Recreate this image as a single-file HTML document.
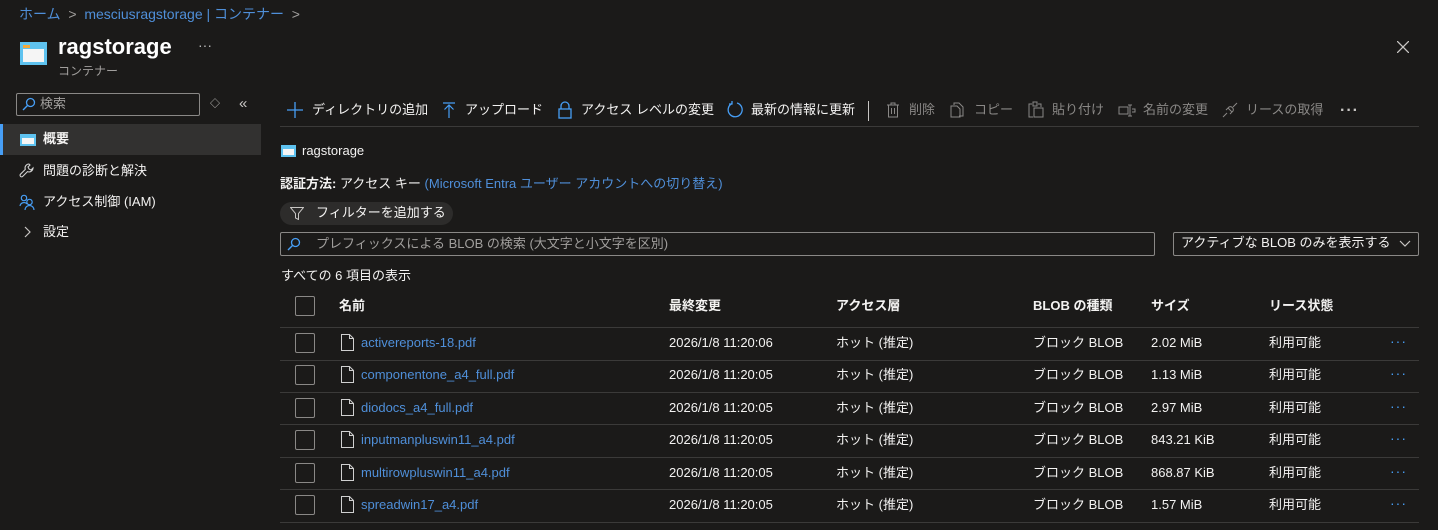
<!DOCTYPE html>
<html><head><meta charset="utf-8"><style>
*{margin:0;padding:0;box-sizing:border-box}
body{width:1438px;height:530px;background:#1b1a19;color:#f3f2f1;font-family:"Liberation Sans","Noto Sans CJK JP",sans-serif;font-size:13px;position:relative;overflow:hidden}
.a{position:absolute;white-space:nowrap;line-height:18px}
.blue{color:#479ef5}
.lnk{color:#4f8fd9}
.g{color:#8a8886}
.tb{top:101px;font-size:13px;line-height:18px}
.hd{font-weight:bold;top:297px;line-height:18px}
.cb{position:absolute;left:295px;width:20px;height:20px;border:1px solid #8a8886;border-radius:2px}
.sep{position:absolute;left:280px;width:1139px;height:1px;background:#3b3a39}
</style></head><body>
<div class="a lnk" style="left:19px;top:4px;font-size:14px;line-height:20px">ホーム &nbsp;<span style="color:#a19f9d">&gt;</span>&nbsp; mesciusragstorage | コンテナー &nbsp;<span style="color:#a19f9d">&gt;</span></div>

<svg class="a" style="left:20px;top:42px" width="27" height="23" viewBox="0 0 27 23"><rect x="0" y="0" width="27" height="23" fill="#5ec2ef"/><rect x="3" y="7" width="21" height="13" fill="#f5f5f5"/><rect x="3" y="3" width="7" height="3" fill="#f2a93b"/></svg>
<div class="a" style="left:58px;top:33px;font-size:22px;line-height:28px;font-weight:bold;color:#fff">ragstorage</div>
<div class="a g" style="left:198px;top:36px;font-size:14px;color:#bbb">···</div>
<div class="a" style="left:58px;top:62px;font-size:12px;color:#a19f9d">コンテナー</div>
<svg class="a" style="left:1397px;top:41px" width="12" height="12"><path d="M0 0L12 12M12 0L0 12" stroke="#c8c6c4" stroke-width="1.3"/></svg>

<div class="a" style="left:16px;top:93px;width:184px;height:23px;border:1px solid #8a8886;border-radius:2px"></div>
<svg class="a" style="left:22px;top:97px" width="14" height="14"><circle cx="8.5" cy="5.5" r="4" stroke="#479ef5" fill="none" stroke-width="1.3"/><path d="M5.5 8.5L1 13" stroke="#479ef5" stroke-width="1.4"/></svg>
<div class="a" style="left:40px;top:95px;color:#a19f9d">検索</div>
<div class="a" style="left:210px;top:96px;font-size:10px;color:#c8c6c4">◇</div>
<div class="a" style="left:239px;top:95px;font-size:15px;color:#c8c6c4">«</div>
<div class="a" style="left:0;top:124px;width:261px;height:31px;background:#323130"></div>
<div class="a" style="left:0;top:124px;width:3px;height:31px;background:#479ef5"></div>
<svg class="a" style="left:20px;top:134px" width="16" height="12"><rect width="16" height="12" fill="#5ec2ef"/><rect x="2" y="4" width="12" height="6" fill="#f5f5f5"/></svg>
<div class="a" style="left:43px;top:130px;font-weight:bold">概要</div>
<svg class="a" style="left:19px;top:163px" width="16" height="16" viewBox="0 0 16 16"><path d="M10 1a4 4 0 0 0-3.7 5.4L1.5 11.2a1.5 1.5 0 0 0 2.2 2.2l4.8-4.8A4 4 0 0 0 14 5l-2 2-2-1-1-2 2-2z" fill="none" stroke="#d0d0d0" stroke-width="1.1"/></svg>
<div class="a" style="left:43px;top:162px">問題の診断と解決</div>
<svg class="a" style="left:19px;top:194px" width="16" height="16"><circle cx="5" cy="4" r="2.7" stroke="#479ef5" fill="none" stroke-width="1.2"/><path d="M1 12a4 4 0 0 1 7 -2" stroke="#479ef5" fill="none" stroke-width="1.2"/><circle cx="10.5" cy="8" r="2.7" stroke="#479ef5" fill="none" stroke-width="1.2"/><path d="M6 16a4.5 4.5 0 0 1 9 0" stroke="#479ef5" fill="none" stroke-width="1.2"/></svg>
<div class="a" style="left:43px;top:193px">アクセス制御 (IAM)</div>
<svg class="a" style="left:24px;top:226px" width="8" height="12"><path d="M1 1l5 5-5 5" stroke="#c8c6c4" fill="none" stroke-width="1.2"/></svg>
<div class="a" style="left:43px;top:223px">設定</div>

<svg class="a" style="left:287px;top:102px" width="16" height="16"><path d="M8 0v16M0 8h16" stroke="#479ef5" stroke-width="1.3"/></svg>
<div class="a tb" style="left:312px">ディレクトリの追加</div>
<svg class="a" style="left:443px;top:102px" width="12" height="16"><path d="M0 1h12M6 3v13M1.5 7.5L6 3l4.5 4.5" stroke="#479ef5" fill="none" stroke-width="1.2"/></svg>
<div class="a tb" style="left:465px">アップロード</div>
<svg class="a" style="left:558px;top:101px" width="14" height="18"><path d="M3 8V5a4 4 0 0 1 8 0v3" stroke="#479ef5" fill="none" stroke-width="1.3"/><rect x="1" y="8" width="12" height="9" stroke="#479ef5" fill="none" stroke-width="1.3"/></svg>
<div class="a tb" style="left:581px">アクセス レベルの変更</div>
<svg class="a" style="left:726px;top:101px" width="18" height="18"><path d="M6 2.5A7 7 0 1 0 11 2" stroke="#479ef5" fill="none" stroke-width="1.3"/><path d="M6 0v3h-3" stroke="#479ef5" fill="none" stroke-width="1.3"/></svg>
<div class="a tb" style="left:751px">最新の情報に更新</div>
<div class="a" style="left:868px;top:101px;width:1px;height:20px;background:#c8c6c4"></div>
<svg class="a" style="left:886px;top:102px" width="14" height="16"><path d="M1 3h12M5 3V1h4v2M2.5 3v12h9V3M5.5 6v6M8.5 6v6" stroke="#8a8886" fill="none"/></svg>
<div class="a tb g" style="left:909px">削除</div>
<svg class="a" style="left:950px;top:102px" width="16" height="16"><path d="M4 3V1h5l4 4v9H9M1 4h6l3 3v8H1z" stroke="#8a8886" fill="none"/></svg>
<div class="a tb g" style="left:974px">コピー</div>
<svg class="a" style="left:1028px;top:101px" width="16" height="17"><path d="M4 3H1v13h4M10 3h3v3M5 1h4v4H5zM6 7h9v9H6z" stroke="#8a8886" fill="none"/></svg>
<div class="a tb g" style="left:1052px">貼り付け</div>
<svg class="a" style="left:1118px;top:104px" width="18" height="13"><path d="M1 3h9v7H1zM12 1v11M10 1h4M10 12h4M14 5h3v3h-3" stroke="#8a8886" fill="none"/></svg>
<div class="a tb g" style="left:1143px">名前の変更</div>
<svg class="a" style="left:1222px;top:102px" width="16" height="16"><path d="M1 15l4-4M6 6l4 4M4 8l3-3a3 3 0 0 1 4 4l-3 3M15 1l-4 4" stroke="#8a8886" fill="none"/></svg>
<div class="a tb g" style="left:1246px">リースの取得</div>
<div class="a" style="left:1340px;top:102px;font-size:16px;font-weight:bold;color:#c8c6c4;letter-spacing:1px">···</div>
<div class="a" style="left:280px;top:126px;width:1139px;height:1px;background:#3b3a39"></div>

<svg class="a" style="left:281px;top:145px" width="15" height="12"><rect width="15" height="12" fill="#5ec2ef"/><rect x="2" y="4" width="11" height="6" fill="#f5f5f5"/></svg>
<div class="a" style="left:302px;top:142px">ragstorage</div>
<div class="a" style="left:280px;top:175px"><b>認証方法:</b> アクセス キー <span class="lnk">(Microsoft Entra ユーザー アカウントへの切り替え)</span></div>
<div class="a" style="left:280px;top:202px;width:173px;height:23px;border-radius:12px;background:#2d2c2b"></div>
<svg class="a" style="left:290px;top:207px" width="14" height="13"><path d="M0.5 0.5h13L8.5 6.5v6l-3-1.5v-4.5z" stroke="#c8c6c4" fill="none"/></svg>
<div class="a" style="left:316px;top:204px">フィルターを追加する</div>
<div class="a" style="left:280px;top:232px;width:875px;height:24px;border:1px solid #8a8886;border-radius:2px"></div>
<svg class="a" style="left:287px;top:237px" width="14" height="14"><circle cx="8.5" cy="5.5" r="4" stroke="#479ef5" fill="none" stroke-width="1.3"/><path d="M5.5 8.5L1 13" stroke="#479ef5" stroke-width="1.4"/></svg>
<div class="a" style="left:316px;top:235px;color:#a19f9d">プレフィックスによる BLOB の検索 (大文字と小文字を区別)</div>
<div class="a" style="left:1173px;top:232px;width:246px;height:24px;border:1px solid #8a8886;border-radius:2px"></div>
<div class="a" style="left:1181px;top:234px">アクティブな BLOB のみを表示する</div>
<svg class="a" style="left:1399px;top:240px" width="12" height="8"><path d="M1 1l5 5 5-5" stroke="#c8c6c4" fill="none" stroke-width="1.2"/></svg>

<div class="a" style="left:281px;top:267px">すべての 6 項目の表示</div>
<div class="cb" style="top:296px"></div>
<div class="a hd" style="left:339px">名前</div>
<div class="a hd" style="left:669px">最終変更</div>
<div class="a hd" style="left:836px">アクセス層</div>
<div class="a hd" style="left:1033px">BLOB の種類</div>
<div class="a hd" style="left:1151px">サイズ</div>
<div class="a hd" style="left:1269px">リース状態</div>
<div class="sep" style="top:327px"></div>

<div id="rows"></div>
<script>
var d=[["activereports-18.pdf","06","2.02 MiB"],["componentone_a4_full.pdf","05","1.13 MiB"],["diodocs_a4_full.pdf","05","2.97 MiB"],["inputmanpluswin11_a4.pdf","05","843.21 KiB"],["multirowpluswin11_a4.pdf","05","868.87 KiB"],["spreadwin17_a4.pdf","05","1.57 MiB"]];
var h="";
d.forEach(function(r,i){var c=343+i*32.4;var t=Math.round(c-9);
h+='<div class="cb" style="top:'+Math.round(c-10)+'px"></div>';
h+='<svg class="a" style="left:341px;top:'+Math.round(c-9)+'px" width="13" height="17"><path d="M0.5 0.5h8l4 4v12h-12z M8.5 0.5v4h4" stroke="#d0d0d0" fill="none"/></svg>';
h+='<div class="a lnk" style="left:361px;top:'+t+'px">'+r[0]+'</div>';
h+='<div class="a" style="left:669px;top:'+t+'px">2026/1/8 11:20:'+r[1]+'</div>';
h+='<div class="a" style="left:836px;top:'+t+'px">ホット (推定)</div>';
h+='<div class="a" style="left:1033px;top:'+t+'px">ブロック BLOB</div>';
h+='<div class="a" style="left:1151px;top:'+t+'px">'+r[2]+'</div>';
h+='<div class="a" style="left:1269px;top:'+t+'px">利用可能</div>';
h+='<div class="a blue" style="left:1390px;top:'+(t-2)+'px;font-size:14px;letter-spacing:1px">···</div>';
h+='<div class="sep" style="top:'+Math.round(c+16.5)+'px"></div>';});
document.getElementById("rows").innerHTML=h;
</script>
</body></html>
